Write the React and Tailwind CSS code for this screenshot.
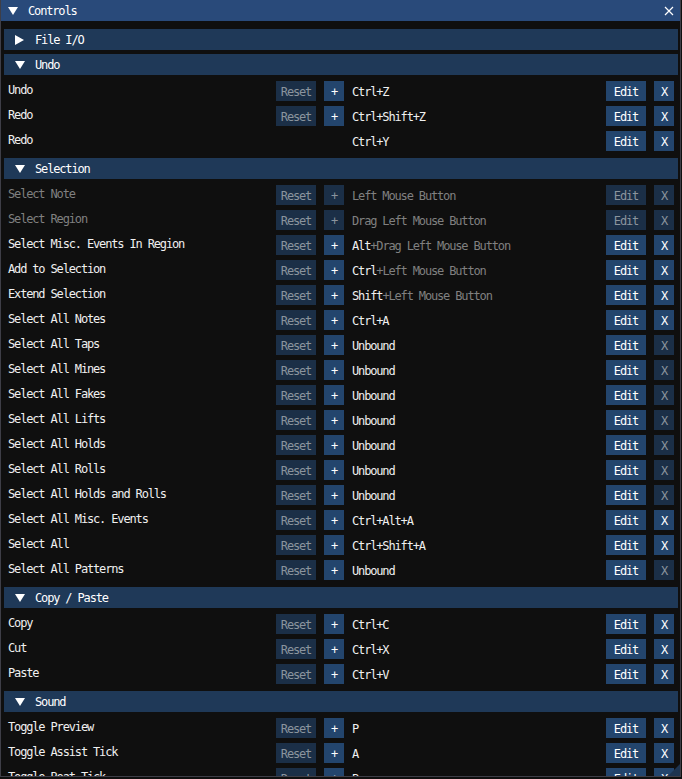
const mono = "font-['DejaVu_Sans_Mono','Liberation_Mono',monospace] text-[12px] tracking-[-1.15px]";

const undoRows = [
  { label: "Undo", keys: [["Ctrl+Z", 1]] },
  { label: "Redo", keys: [["Ctrl+Shift+Z", 1]] },
  { label: "Redo", keys: [["Ctrl+Y", 1]], secondary: true },
];

const selectionRows = [
  { label: "Select Note", dim: true, keys: [["Left Mouse Button", 0]], plusOff: true, editOff: true, xOff: true },
  { label: "Select Region", dim: true, keys: [["Drag Left Mouse Button", 0]], plusOff: true, editOff: true, xOff: true },
  { label: "Select Misc. Events In Region", keys: [["Alt", 1], ["+Drag Left Mouse Button", 0]] },
  { label: "Add to Selection", keys: [["Ctrl", 1], ["+Left Mouse Button", 0]] },
  { label: "Extend Selection", keys: [["Shift", 1], ["+Left Mouse Button", 0]] },
  { label: "Select All Notes", keys: [["Ctrl+A", 1]] },
  { label: "Select All Taps", keys: [["Unbound", 1]], xOff: true },
  { label: "Select All Mines", keys: [["Unbound", 1]], xOff: true },
  { label: "Select All Fakes", keys: [["Unbound", 1]], xOff: true },
  { label: "Select All Lifts", keys: [["Unbound", 1]], xOff: true },
  { label: "Select All Holds", keys: [["Unbound", 1]], xOff: true },
  { label: "Select All Rolls", keys: [["Unbound", 1]], xOff: true },
  { label: "Select All Holds and Rolls", keys: [["Unbound", 1]], xOff: true },
  { label: "Select All Misc. Events", keys: [["Ctrl+Alt+A", 1]] },
  { label: "Select All", keys: [["Ctrl+Shift+A", 1]] },
  { label: "Select All Patterns", keys: [["Unbound", 1]], xOff: true },
];

const copyRows = [
  { label: "Copy", keys: [["Ctrl+C", 1]] },
  { label: "Cut", keys: [["Ctrl+X", 1]] },
  { label: "Paste", keys: [["Ctrl+V", 1]] },
];

const soundRows = [
  { label: "Toggle Preview", keys: [["P", 1]] },
  { label: "Toggle Assist Tick", keys: [["A", 1]] },
  { label: "Toggle Beat Tick", keys: [["B", 1]] },
];

function DownArrow() {
  return <svg width="10" height="8" viewBox="0 0 10 8" className="shrink-0">
      <path d="M0 0H10L5 8Z" fill="#ffffff" />
    </svg>;
}

function RightArrow() {
  return <svg width="9" height="10" viewBox="0 0 9 10" className="shrink-0">
      <path d="M0 0L9 5L0 10Z" fill="#ffffff" />
    </svg>;
}

function Btn({ children, off, wide }) {
  return <div
    className={`h-5 shrink-0 flex items-center justify-center pt-[2px] ${wide ? "w-10" : "w-5"} ${off ? "bg-[#1b2f47] text-[#8b949e]" : "bg-[#23456d] text-white"}`}
  >
      {children}
    </div>;
}

function Row({ row }) {
  return <div className="flex h-5 items-start">
      <div className={`w-[272px] shrink-0 pl-1 pt-[2px] leading-[14px] whitespace-nowrap ${row.dim ? "text-[#808080]" : "text-[#f0f0f0]"}`}>
        {row.label}
      </div>
      {row.secondary ? <div className="w-[76px] shrink-0" /> : <>
          <Btn wide off>Reset</Btn>
          <div className="w-2 shrink-0" />
          <Btn off={row.plusOff}>+</Btn>
          <div className="w-2 shrink-0" />
        </>}
      <div className="flex-1 h-5 pt-[2px] flex items-center whitespace-nowrap">
        {row.keys.map(([t, bright], i) => <span key={i} className={bright && !row.dim ? "text-[#f0f0f0]" : "text-[#808080]"}>{t}</span>)}
      </div>
      <Btn wide off={row.editOff}>Edit</Btn>
      <div className="w-2 shrink-0" />
      <Btn off={row.xOff}>X</Btn>
      <div className="w-1 shrink-0" />
    </div>;
}

function Header({ title, open }) {
  return <div className="h-[21px] bg-[#1f3958] flex items-center text-white">
      <div className="w-[31px] pl-[11px] shrink-0 flex items-center">
        {open ? <DownArrow /> : <RightArrow />}
      </div>
      <span className="pt-px">{title}</span>
    </div>;
}

function Section({ title, rows }) {
  return <div className="flex flex-col">
      <Header title={title} open />
      <div className="flex flex-col gap-[5px] mt-[6px] mb-[7px]">
        {rows.map((r, i) => <Row key={i} row={r} />)}
      </div>
    </div>;
}

export default function App() {
  return <div className="w-[682px] h-[779px] bg-[#0f0f0f] overflow-hidden">
      <div className={`relative w-[681px] h-[777px] border border-[#3e3e47] border-t-0 bg-[#0f0f0f] overflow-hidden flex flex-col ${mono}`}>
        <div className="h-[21px] shrink-0 bg-[#294a7a] flex items-center text-white -mx-px">
          <div className="w-[28px] pl-2 shrink-0 flex items-center">
            <DownArrow />
          </div>
          <span className="pt-px">Controls</span>
          <div className="flex-1" />
          <svg width="10" height="10" viewBox="0 0 10 10" className="mr-[7px]">
            <path d="M1 1L9 9M9 1L1 9" stroke="#ffffff" strokeWidth="1.2" />
          </svg>
        </div>
        <div className="flex flex-col pl-[3px] pr-[2px] pt-2">
          <div className="mb-1">
            <div className="h-[21px] bg-[#1f3958] flex items-center text-white">
              <div className="w-[31px] pl-[11px] shrink-0 flex items-center">
                <RightArrow />
              </div>
              <span className="pt-px">File I/O</span>
            </div>
          </div>
          <Section title="Undo" rows={undoRows} />
          <Section title="Selection" rows={selectionRows} />
          <Section title="Copy / Paste" rows={copyRows} />
          <Section title="Sound" rows={soundRows} />
        </div>
        <svg width="12" height="12" viewBox="0 0 12 12" className="absolute right-0 bottom-0">
          <path d="M12 0V12H0Z" fill="#1d3450" />
        </svg>
      </div>
    </div>;
}
